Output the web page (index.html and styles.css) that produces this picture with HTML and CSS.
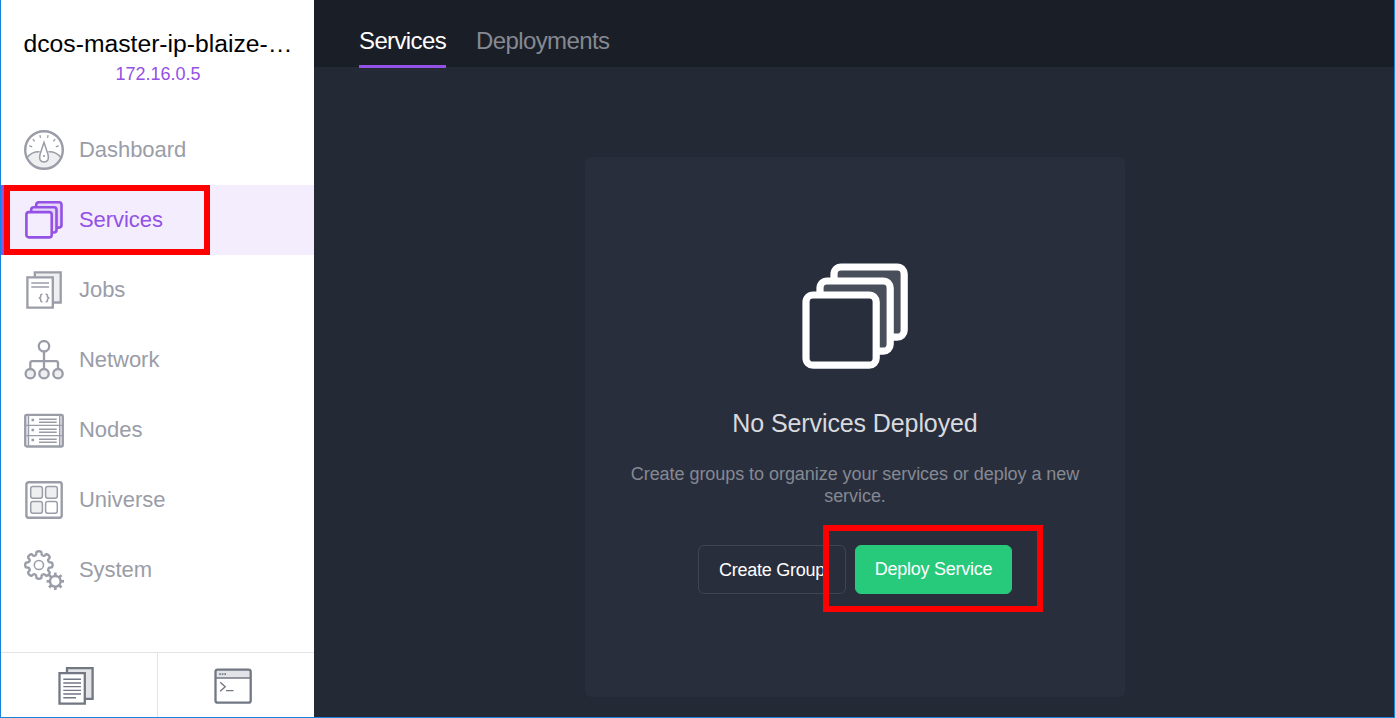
FILE: index.html
```html
<!DOCTYPE html>
<html lang="en">
<head>
<meta charset="utf-8">
<title>Services</title>
<link rel="stylesheet" href="styles.css">
</head>
<body>
<div class="window">
  <aside class="sidebar">
    <header class="cluster">
      <div class="cluster-name">dcos-master-ip-blaize-…</div>
      <div class="cluster-ip">172.16.0.5</div>
    </header>
    <nav class="nav">
      <a class="nav-item">
        <svg class="icon" viewBox="0 0 40 40">
          <path class="tint" stroke="none" d="M2.800 27.500Q9 20.800 20 20.800T37.200 27.500A18.900 18.900 0 0 1 2.800 27.500Z"/>
          <path stroke-width="1.500" d="M3 27.500Q8.500 21.300 15.500 21.800M37 27.500Q31.500 21.300 24.500 21.800"/>
          <circle cx="20" cy="20" r="18.800" stroke-width="2.400"/>
          <path class="paper" stroke-width="1.500" d="M20 12.300L16 24.500Q14.400 32 20 32T24 24.500Z"/>
          <circle class="solid" cx="20" cy="26" r="1.100" stroke="none"/>
          <path stroke-width="1.300" d="M5.300 15.700l2.800 1.100M8.800 9.200l1.900 2.200M15.900 5.200l.6 2.700M24.100 5.200l-.6 2.700M31.200 9.200l-1.900 2.200M34.700 15.700l-2.800 1.100"/>
        </svg>
        <span>Dashboard</span>
      </a>
      <a class="nav-item active">
        <svg class="icon" viewBox="0 0 40 40" stroke-width="2.600">
          <rect class="tint" x="12.200" y="2.300" width="25.300" height="25.300" rx="2.500"/>
          <rect class="tint" x="7.200" y="7.200" width="25.300" height="25.300" rx="2.500"/>
          <rect class="paper" x="2.400" y="12.100" width="25.300" height="25.300" rx="2.500"/>
        </svg>
        <span>Services</span>
        <i class="highlight highlight-nav"></i>
      </a>
      <a class="nav-item">
        <svg class="icon" viewBox="0 0 40 40" stroke-width="2.300">
          <path class="tint" d="M10.800 2.300H36.700V32.500H10.800Z"/>
          <path class="paper" d="M3.400 7.300H28.800V37.600H3.400Z"/>
          <path stroke-width="1.500" d="M7.300 13H25M7.300 17H25"/>
          <path stroke-width="1.500" d="M18.500 24.300h-.6q-1.200 0-1.200 1.200v1.300l-1.300 1.200 1.300 1.200v1.300q0 1.200 1.200 1.200h.6M21.700 24.300h.6q1.200 0 1.200 1.200v1.300l1.300 1.200-1.300 1.200v1.300q0 1.200-1.200 1.200h-.6"/>
        </svg>
        <span>Jobs</span>
      </a>
      <a class="nav-item">
        <svg class="icon" viewBox="0 0 40 40" stroke-width="2.300">
          <path d="M20 11.500V29M6.300 29V23.200q0-2 2-2H32q2 0 2 2V29"/>
          <circle class="paper" cx="20" cy="6.300" r="5.200"/>
          <circle class="tint" cx="6.300" cy="33.700" r="4.700"/>
          <circle class="tint" cx="20" cy="33.700" r="4.700"/>
          <circle class="tint" cx="34" cy="33.700" r="4.700"/>
        </svg>
        <span>Network</span>
      </a>
      <a class="nav-item">
        <svg class="icon" viewBox="0 0 40 40" stroke-width="1.400">
          <path class="tint" stroke="none" d="M1 5H4V37H1ZM36 5H39V37H36Z"/>
          <rect x="1.200" y="4.900" width="37.600" height="31.600" rx="1.500" stroke-width="2.300"/>
          <path d="M4.500 5V36.500M35.700 5V36.500M2 15.400H38M2 25.600H38"/>
          <path d="M15 9.300H32.700M15 12.300H32.700M15 19.300H32.700M15 22.300H32.700M15 29.300H32.700M15 32.300H32.700"/>
          <path class="solid" stroke="none" d="M7.500 8.800h2.600v2.500H7.500ZM7.500 18.800h2.600v2.500H7.500ZM7.500 28.800h2.600v2.500H7.500Z"/>
        </svg>
        <span>Nodes</span>
      </a>
      <a class="nav-item">
        <svg class="icon" viewBox="0 0 40 40" stroke-width="1.500">
          <rect x="2.400" y="2.200" width="35.300" height="35.600" rx="2.200" stroke-width="2.400"/>
          <rect class="tint" x="6.700" y="6.600" width="11.700" height="11.700" rx="2.200"/>
          <rect class="tint" x="21.600" y="6.600" width="11.700" height="11.700" rx="2.200"/>
          <rect class="tint" x="6.700" y="21.500" width="11.700" height="11.700" rx="2.200"/>
          <rect x="21.600" y="21.500" width="11.700" height="11.700" rx="2.200"/>
        </svg>
        <span>Universe</span>
      </a>
      <a class="nav-item">
        <svg class="icon" viewBox="0 0 40 40">
          <defs>
            <path id="tooth" d="M9.200-3.800Q10.200-2.300 11.800-2.600Q13.700-2.800 13.700 0T11.800 2.600Q10.200 2.300 9.200 3.800"/>
            <path id="cog" d="M5.500 0H8.700"/>
          </defs>
          <g transform="translate(14.900 15)" stroke-width="2.400">
            <use href="#tooth"/><use href="#tooth" transform="rotate(45)"/><use href="#tooth" transform="rotate(90)"/><use href="#tooth" transform="rotate(135)"/><use href="#tooth" transform="rotate(180)"/><use href="#tooth" transform="rotate(225)"/><use href="#tooth" transform="rotate(270)"/><use href="#tooth" transform="rotate(315)"/>
            <circle r="4.600" stroke-width="1.500"/>
          </g>
          <circle class="paper" cx="31.300" cy="31.300" r="8.300" stroke="none"/>
          <g transform="translate(31.300 31.300)" stroke-width="2.700">
            <use href="#cog"/><use href="#cog" transform="rotate(45)"/><use href="#cog" transform="rotate(90)"/><use href="#cog" transform="rotate(135)"/><use href="#cog" transform="rotate(180)"/><use href="#cog" transform="rotate(225)"/><use href="#cog" transform="rotate(270)"/><use href="#cog" transform="rotate(315)"/>
            <circle r="5.300" stroke-width="2.400"/>
          </g>
        </svg>
        <span>System</span>
      </a>
    </nav>
    <footer class="sidebar-footer">
      <a class="footer-item">
        <svg class="icon icon-dark" viewBox="0 0 40 40" stroke-width="2.300">
          <path class="tint" d="M11 3.200H36.600V33.800H11Z"/>
          <path class="paper" d="M3.500 8.200H28.800V38.600H3.500Z"/>
          <path stroke-width="1.400" d="M7.300 14.200H25M7.300 18H25M7.300 21.600H25M7.300 25.400H25M7.300 29H25M7.300 32.800H20"/>
        </svg>
      </a>
      <a class="footer-item">
        <svg class="icon icon-dark" viewBox="0 0 40 40" stroke-width="2.300">
          <path class="tint" stroke="none" d="M2 5H38V13H2Z"/>
          <rect x="2.500" y="4.600" width="35.200" height="33" rx="2.200"/>
          <path stroke-width="1.400" d="M2.500 13H37.700"/>
          <path stroke-width="1.700" stroke-dasharray="1.600 1" d="M6.200 9.200H13.500"/>
          <path stroke-width="1.400" d="M7.200 17.200l5 4.500-5 4.500M13 25.600H20.500"/>
        </svg>
      </a>
    </footer>
  </aside>
  <main class="main">
    <nav class="tabs">
      <a class="tab tab-active">Services</a>
      <a class="tab">Deployments</a>
    </nav>
    <section class="panel">
      <svg class="panel-icon" viewBox="0 0 106 106" stroke-width="7.200">
        <rect class="sheet" x="32" y="4" width="70.200" height="70.200" rx="7"/>
        <rect class="sheet" x="18" y="18" width="70.200" height="70.200" rx="7"/>
        <rect class="sheet-front" x="4" y="32" width="70.200" height="70.200" rx="7"/>
      </svg>
      <h1 class="panel-title">No Services Deployed</h1>
      <p class="panel-text">Create groups to organize your services or deploy a new service.</p>
      <div class="actions">
        <a class="button">Create Group</a>
        <a class="button button-success">Deploy Service</a>
        <i class="highlight highlight-deploy"></i>
      </div>
    </section>
  </main>
</div>
</body>
</html>
```
FILE: styles.css
```css
* { box-sizing: border-box; }
body {
  margin: 0;
  font-family: "Liberation Sans", Arial, sans-serif;
}
.window {
  display: flex;
  width: 1395px;
  height: 718px;
  border: 1px solid #1a82d8;
  border-top: 0;
  overflow: hidden;
}
.sidebar {
  display: flex;
  flex-direction: column;
  width: 313px;
  flex: none;
  background: #fff;
}
.cluster {
  height: 115px;
  padding: 29px 0 0 1px;
  text-align: center;
  white-space: nowrap;
}
.cluster-name {
  font-size: 24.7px;
  line-height: 30px;
  color: #000;
}
.cluster-ip {
  margin-top: 4px;
  font-size: 18px;
  line-height: 22px;
  color: #9351e5;
}
.nav { flex: 1; }
.nav-item {
  position: relative;
  display: flex;
  align-items: center;
  gap: 15px;
  height: 70px;
  padding-left: 23px;
  font-size: 22px;
  line-height: 26px;
  letter-spacing: -0.05px;
  color: #9a9da7;
}
.nav-item.active {
  padding-left: 20px;
  border-left: 3px solid #9351e5;
  background: #f4edfd;
  color: #9351e5;
}
.icon {
  width: 40px;
  height: 40px;
  flex: none;
  fill: none;
  stroke: currentColor;
}
.icon .tint { fill: #eeeff1; }
.icon .paper { fill: #fff; }
.icon .solid { fill: currentColor; }
.active .icon .tint { fill: #e6d7fa; }
.active .icon .paper { fill: #f4edfd; }
.highlight {
  position: absolute;
  border: 6px solid #f00;
}
.highlight-nav {
  left: 0;
  top: 0;
  width: 206px;
  height: 70px;
}
.sidebar-footer {
  display: grid;
  grid-template-columns: 157px 1fr;
  height: 65px;
  border-top: 1px solid #e3e3e5;
}
.footer-item {
  display: flex;
  justify-content: center;
  padding-top: 12px;
}
.footer-item:first-child {
  padding-right: 7px;
  border-right: 1px solid #e3e3e5;
}
.footer-item:last-child { padding-right: 6px; }
.icon-dark { color: #727784; }
.icon-dark .tint { fill: #e2e3e6; }
.main {
  flex: 1;
  background: #242936;
}
.tabs {
  display: flex;
  gap: 30px;
  height: 67px;
  padding-left: 45px;
  background: #1a1e27;
}
.tab {
  height: 68px;
  padding-top: 27px;
  font-size: 24px;
  line-height: 28px;
  letter-spacing: -0.62px;
  color: #858992;
}
.tab-active {
  color: #fff;
  border-bottom: 3px solid #9351e5;
}
.panel {
  display: flex;
  flex-direction: column;
  align-items: center;
  width: 540px;
  height: 540px;
  margin: 90px 0 0 271px;
  padding-top: 106px;
  border-radius: 6px;
  background: #292e3d;
}
.panel-icon {
  width: 106px;
  height: 106px;
  stroke: #fff;
}
.sheet { fill: #494e5b; }
.sheet-front { fill: #292e3d; }
.panel-title {
  margin: 39px 0 0;
  font-size: 25px;
  font-weight: 400;
  line-height: 30px;
  letter-spacing: -0.1px;
  color: #d9dade;
}
.panel-text {
  width: 460px;
  margin: 25px 0 0;
  font-size: 18px;
  line-height: 22px;
  letter-spacing: -0.05px;
  text-align: center;
  color: #858992;
}
.actions {
  position: relative;
  display: flex;
  gap: 9px;
  margin-top: 38px;
}
.button {
  width: 148px;
  height: 49px;
  padding-top: 12px;
  border: 1px solid #404553;
  border-radius: 6px;
  font-size: 18px;
  line-height: 24px;
  letter-spacing: -0.25px;
  text-align: center;
  white-space: nowrap;
  color: #fff;
}
.button-success {
  width: 157px;
  padding-top: 11px;
  border-color: #27c97b;
  background: #27c97b;
}
.highlight-deploy {
  left: 125px;
  top: -20px;
  width: 220px;
  height: 87px;
}
```
